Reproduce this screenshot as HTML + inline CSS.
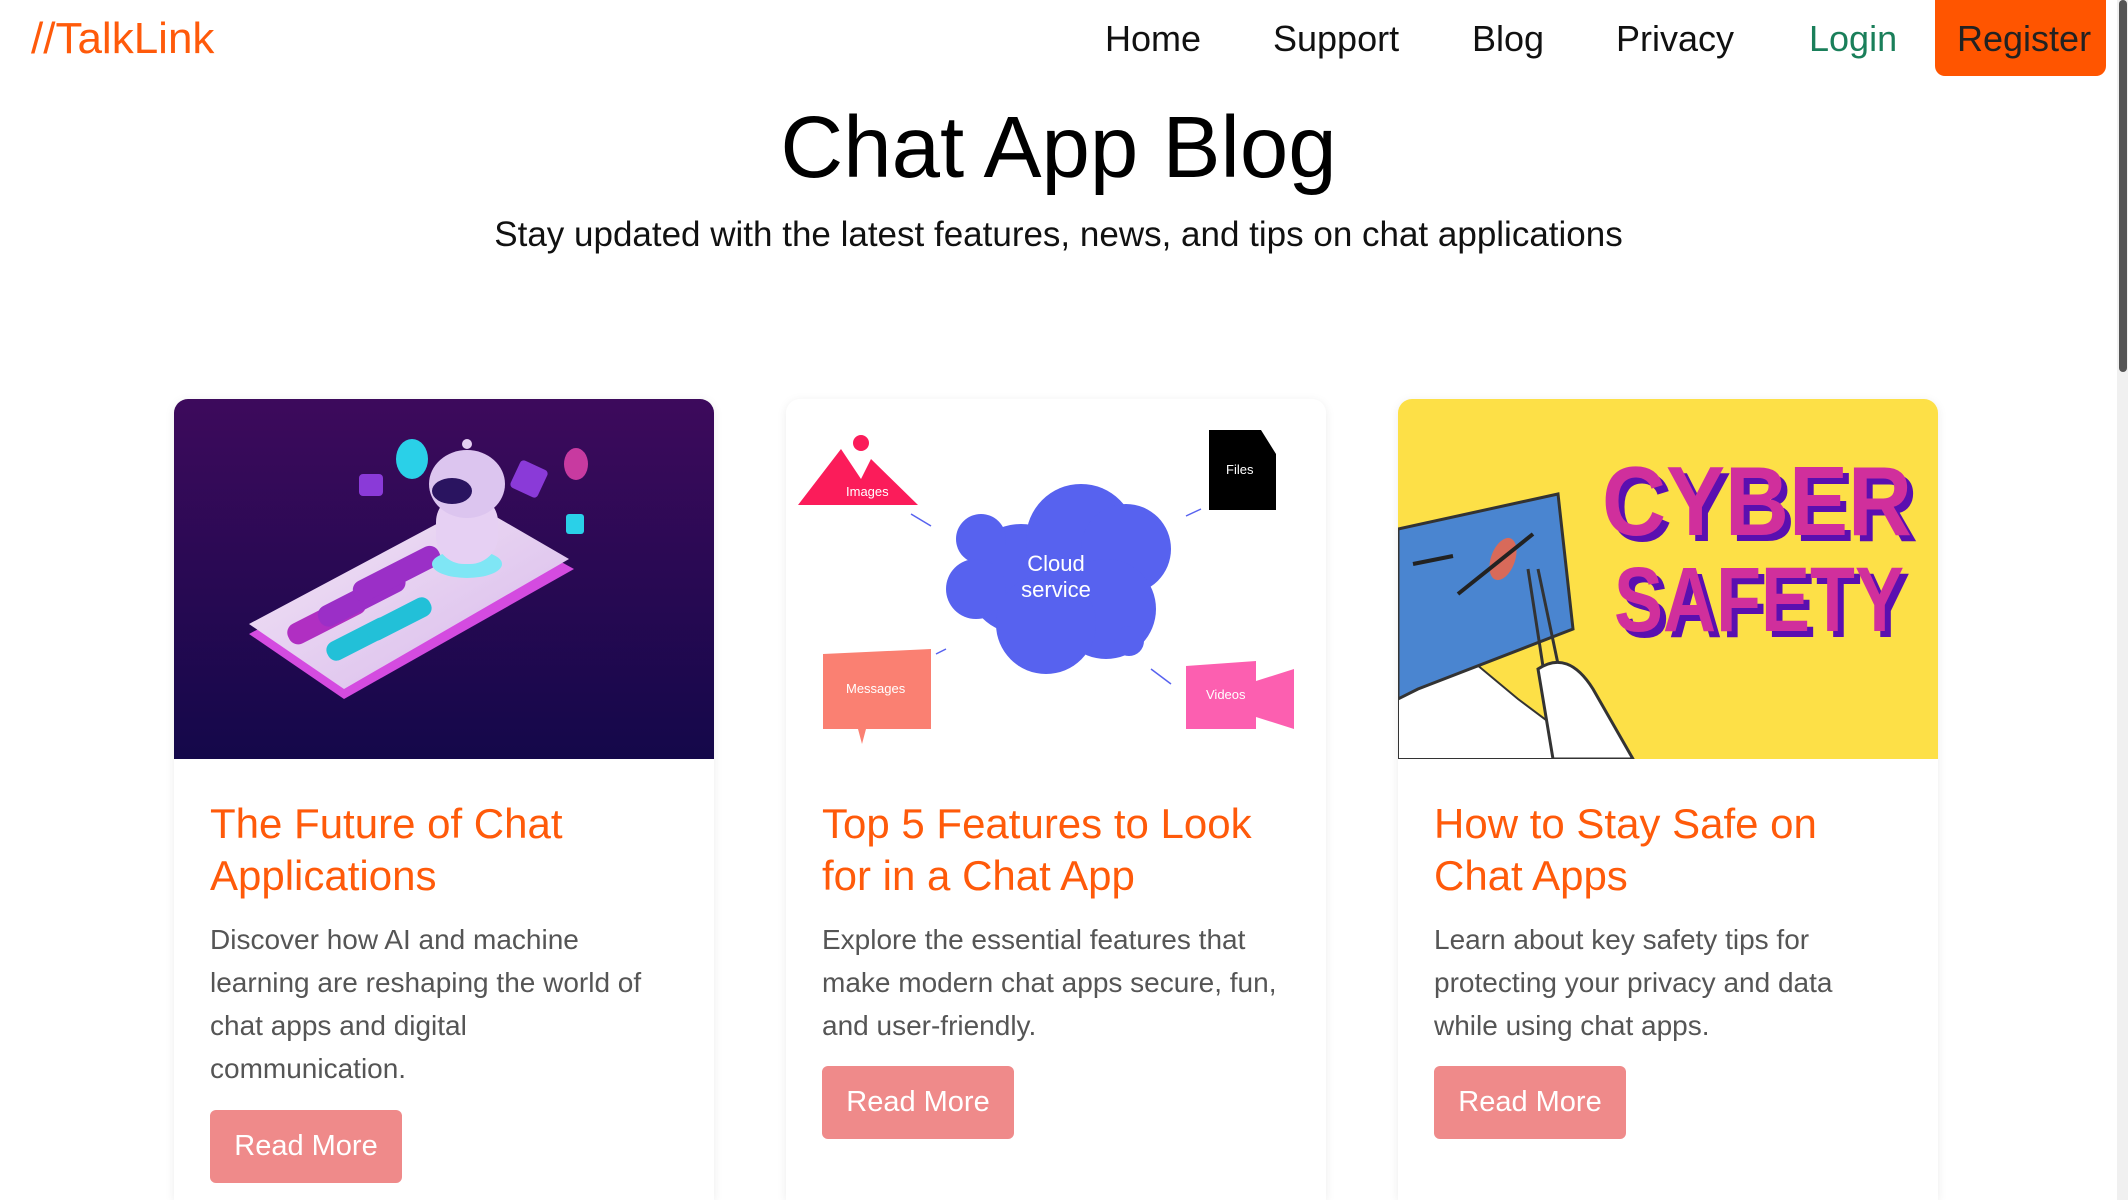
<!DOCTYPE html>
<html><head><meta charset="utf-8"><style>
*{margin:0;padding:0;box-sizing:border-box}
html,body{width:2128px;height:1200px;overflow:hidden}
body{background:#fff;font-family:"Liberation Sans",sans-serif;position:relative}
.a{position:absolute;white-space:nowrap}
.nav{font-size:36px;color:#111;top:18px}
.card{position:absolute;top:399px;width:540px;height:801px;background:#fff;border-radius:14px 14px 0 0;box-shadow:0 2px 10px rgba(0,0,0,.08);overflow:hidden}
.card svg{display:block}
.ct{position:absolute;left:36px;top:399px;font-size:42px;line-height:52px;color:#ff5a0a;white-space:nowrap}
.cb{position:absolute;left:36px;top:519px;font-size:28px;line-height:43px;color:#555;white-space:nowrap}
.btn{position:absolute;left:36px;width:192px;height:73px;background:#ef8a8a;border-radius:6px;color:#fff;font-size:29px;line-height:73px;text-align:center}
</style></head><body>
<div class="a" style="left:31px;top:14px;font-size:44px;color:#ff5a0a">//TalkLink</div>
<div class="a nav" style="left:1105px">Home</div>
<div class="a nav" style="left:1273px">Support</div>
<div class="a nav" style="left:1472px">Blog</div>
<div class="a nav" style="left:1616px">Privacy</div>
<div class="a nav" style="left:1809px;color:#1a7f5a">Login</div>
<div class="a" style="left:1935px;top:0;width:171px;height:76px;background:#ff5500;border-radius:0 0 10px 10px"></div>
<div class="a nav" style="left:1957px;color:#222">Register</div>
<div class="a" style="left:2117px;top:0;width:11px;height:1200px;background:#f0f0f0"></div>
<div class="a" style="left:2119px;top:0;width:8px;height:372px;background:#555;border-radius:4px"></div>
<div class="a" style="left:0;width:2117px;text-align:center;top:98px;font-size:87px;color:#000">Chat App Blog</div>
<div class="a" style="left:0;width:2117px;text-align:center;top:215px;font-size:35px;color:#111">Stay updated with the latest features, news, and tips on chat applications</div>

<div class="card" style="left:174px">
<svg width="540" height="360" viewBox="0 0 540 360">
<defs><linearGradient id="g1" x1="0" y1="0" x2="0" y2="1"><stop offset="0" stop-color="#3d0a5c"/><stop offset="1" stop-color="#14084a"/></linearGradient>
<linearGradient id="ph" x1="0" y1="0" x2="1" y2="1"><stop offset="0" stop-color="#f3e6f7"/><stop offset="1" stop-color="#d7b8ea"/></linearGradient></defs>
<rect width="540" height="360" fill="url(#g1)"/>
<polygon points="75,235 300,115 400,170 170,300" fill="#d44be0"/>
<polygon points="75,225 300,105 395,160 170,290" fill="url(#ph)"/>
<rect x="110" y="210" width="85" height="22" rx="10" fill="#b02fc2" transform="rotate(-27 150 220)"/>
<rect x="140" y="190" width="95" height="22" rx="10" fill="#9b2fc7" transform="rotate(-27 185 200)"/>
<rect x="175" y="165" width="95" height="22" rx="10" fill="#9b2fc7" transform="rotate(-27 220 175)"/>
<rect x="150" y="230" width="70" height="20" rx="9" fill="#22c0d8" transform="rotate(-27 185 240)"/>
<rect x="190" y="210" width="70" height="20" rx="9" fill="#22c0d8" transform="rotate(-27 225 220)"/>
<ellipse cx="293" cy="165" rx="35" ry="14" fill="#7fe6f5"/>
<rect x="262" y="95" width="62" height="70" rx="28" fill="#e6d0f3"/>
<ellipse cx="293" cy="85" rx="38" ry="34" fill="#dcc5ef"/>
<ellipse cx="278" cy="92" rx="20" ry="13" fill="#2a1460"/>
<circle cx="293" cy="45" r="5" fill="#e6d0f3"/>
<ellipse cx="238" cy="60" rx="16" ry="20" fill="#2ad0e8"/>
<rect x="185" y="75" width="24" height="22" rx="4" fill="#8a3ad8"/>
<rect x="340" y="65" width="30" height="30" rx="4" fill="#8a3ad8" transform="rotate(25 355 80)"/>
<ellipse cx="402" cy="65" rx="12" ry="16" fill="#c83aa0"/>
<rect x="392" y="115" width="18" height="20" rx="3" fill="#2ad0e8"/>
</svg>
<div class="ct">The Future of Chat<br>Applications</div>
<div class="cb">Discover how AI and machine<br>learning are reshaping the world of<br>chat apps and digital<br>communication.</div>
<div class="btn" style="top:711px">Read More</div>
</div>

<div class="card" style="left:786px">
<svg width="540" height="360" viewBox="0 0 540 360" font-family="Liberation Sans,sans-serif">
<rect width="540" height="360" fill="#fff"/>
<polygon points="12,106 55,50 75,80 85,60 132,106" fill="#fb1c5a"/>
<circle cx="75" cy="44" r="8" fill="#fb1c5a"/>
<text x="60" y="97" font-size="13" fill="#fff">Images</text>
<polygon points="423,31 475,31 490,55 490,111 423,111" fill="#000"/>
<text x="440" y="75" font-size="13" fill="#fff">Files</text>
<g fill="#5762ef"><circle cx="235" cy="180" r="55"/><circle cx="295" cy="140" r="55"/><circle cx="340" cy="150" r="45"/><circle cx="320" cy="210" r="50"/><circle cx="260" cy="225" r="50"/><circle cx="195" cy="140" r="25"/><circle cx="190" cy="190" r="30"/><circle cx="343" cy="242" r="15"/></g>
<text x="270" y="172" font-size="22" fill="#fff" text-anchor="middle">Cloud</text>
<text x="270" y="198" font-size="22" fill="#fff" text-anchor="middle">service</text>
<polygon points="37,255 145,250 145,330 80,330 76,345 72,330 37,330" fill="#fa8072"/>
<text x="60" y="294" font-size="13" fill="#fff">Messages</text>
<polygon points="400,267 470,262 470,282 508,270 508,330 470,318 470,330 400,330" fill="#fc5fb0"/>
<text x="420" y="300" font-size="13" fill="#fff">Videos</text>
<g stroke="#5762ef" stroke-width="1.5"><line x1="125" y1="115" x2="145" y2="127"/><line x1="415" y1="110" x2="400" y2="117"/><line x1="150" y1="255" x2="160" y2="250"/><line x1="365" y1="270" x2="385" y2="285"/></g>
</svg>
<div class="ct">Top 5 Features to Look<br>for in a Chat App</div>
<div class="cb">Explore the essential features that<br>make modern chat apps secure, fun,<br>and user-friendly.</div>
<div class="btn" style="top:667px">Read More</div>
</div>

<div class="card" style="left:1398px">
<svg width="540" height="360" viewBox="0 0 540 360" font-family="Liberation Sans,sans-serif">
<rect width="540" height="360" fill="#fde047"/>
<polygon points="0,360 0,280 60,250 120,300 200,360" fill="#fff" stroke="#333" stroke-width="2"/>
<polygon points="0,130 160,95 175,230 20,290 0,300" fill="#4a85d0" stroke="#333" stroke-width="3"/>
<path d="M130,170 l30,195 M140,170 l40,190" stroke="#333" stroke-width="3" fill="none"/>
<path d="M140,270 q30,-20 55,20 l40,70 h-80 z" fill="#fff" stroke="#333" stroke-width="3"/>
<ellipse cx="105" cy="160" rx="12" ry="22" fill="#d86a5a" transform="rotate(20 105 160)"/>
<path d="M15,165 l40,-8 M60,195 l75,-60" stroke="#222" stroke-width="4"/>
<g font-weight="bold" font-family="Liberation Sans Narrow,Liberation Sans,sans-serif">
<text x="210" y="142" font-size="98" fill="#5a0fb0" textLength="310" lengthAdjust="spacingAndGlyphs">CYBER</text>
<text x="204" y="136" font-size="98" fill="#d02f9c" textLength="310" lengthAdjust="spacingAndGlyphs">CYBER</text>
<text x="222" y="238" font-size="92" fill="#5a0fb0" textLength="290" lengthAdjust="spacingAndGlyphs">SAFETY</text>
<text x="216" y="232" font-size="92" fill="#d02f9c" textLength="290" lengthAdjust="spacingAndGlyphs">SAFETY</text>
</g>
</svg>
<div class="ct">How to Stay Safe on<br>Chat Apps</div>
<div class="cb">Learn about key safety tips for<br>protecting your privacy and data<br>while using chat apps.</div>
<div class="btn" style="top:667px">Read More</div>
</div>
</body></html>
